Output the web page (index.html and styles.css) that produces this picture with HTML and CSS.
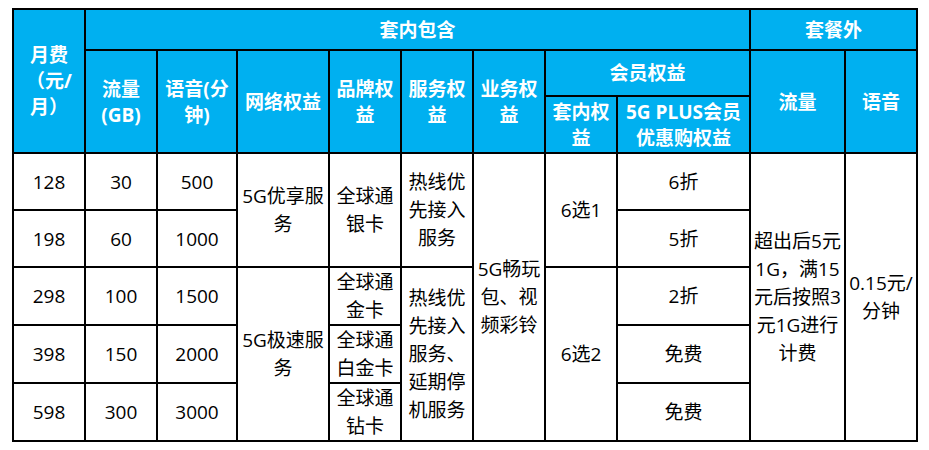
FILE: index.html
```html
<!DOCTYPE html>
<html lang="zh">
<head>
<meta charset="utf-8">
<title>套餐资费</title>
<link rel="stylesheet" href="styles.css">
</head>
<body>
<div class="page">
<table class="plan">
  <colgroup>
    <col class="c72"><col class="c72"><col class="c80"><col class="c92"><col class="c72"><col class="c72"><col class="c72"><col class="c72"><col class="c133"><col class="c95"><col class="c72">
  </colgroup>
  <thead>
    <tr class="h1">
      <th rowspan="3">月费<br>（元/<br>月）</th>
      <th colspan="8">套内包含</th>
      <th colspan="2">套餐外</th>
    </tr>
    <tr class="h2">
      <th rowspan="2">流量<br>(GB)</th>
      <th rowspan="2">语音(分<br>钟)</th>
      <th rowspan="2">网络权益</th>
      <th rowspan="2">品牌权<br>益</th>
      <th rowspan="2">服务权<br>益</th>
      <th rowspan="2">业务权<br>益</th>
      <th colspan="2">会员权益</th>
      <th rowspan="2">流量</th>
      <th rowspan="2">语音</th>
    </tr>
    <tr class="h3">
      <th>套内权<br>益</th>
      <th>5G PLUS会员<br>优惠购权益</th>
    </tr>
  </thead>
  <tbody>
    <tr>
      <td>128</td><td>30</td><td>500</td>
      <td rowspan="2">5G优享服<br>务</td>
      <td rowspan="2">全球通<br>银卡</td>
      <td rowspan="2">热线优<br>先接入<br>服务</td>
      <td rowspan="5">5G畅玩<br>包、视<br>频彩铃</td>
      <td rowspan="2">6选1</td>
      <td>6折</td>
      <td rowspan="5">超出后5元<br>1G，满15<br>元后按照3<br>元1G进行<br>计费</td>
      <td rowspan="5">0.15元/<br>分钟</td>
    </tr>
    <tr>
      <td>198</td><td>60</td><td>1000</td>
      <td>5折</td>
    </tr>
    <tr>
      <td>298</td><td>100</td><td>1500</td>
      <td rowspan="3">5G极速服<br>务</td>
      <td>全球通<br>金卡</td>
      <td rowspan="3">热线优<br>先接入<br>服务、<br>延期停<br>机服务</td>
      <td rowspan="3">6选2</td>
      <td>2折</td>
    </tr>
    <tr>
      <td>398</td><td>150</td><td>2000</td>
      <td>全球通<br>白金卡</td>
      <td>免费</td>
    </tr>
    <tr>
      <td>598</td><td>300</td><td>3000</td>
      <td>全球通<br>钻卡</td>
      <td>免费</td>
    </tr>
  </tbody>
</table>
</div>
</body>
</html>
```
FILE: styles.css
```css
html, body {
  margin: 0;
  padding: 0;
  background: #ffffff;
}
.page {
  padding: 8px 0 0 12px;
}
.plan {
  border-collapse: collapse;
  table-layout: fixed;
  width: 906px;
  font-family: "Open Sans", "Noto Sans CJK SC", sans-serif;
  font-size: 19px;
  color: #000;
}
.c72 { width: 72px; }
.c80 { width: 80px; }
.c92 { width: 92px; }
.c133 { width: 133px; }
.c95 { width: 95px; }
.plan th, .plan td {
  border: 2px solid #000;
  padding: 0 1px;
  text-align: center;
  vertical-align: middle;
  overflow: hidden;
  white-space: nowrap;
}
.plan th {
  background: #00b0f0;
  color: #fff;
  font-weight: 700;
  line-height: 26px;
}
.plan td {
  font-weight: 400;
  line-height: 28px;
}
.h1 { height: 41px; }
.h2 { height: 46px; }
.h3 { height: 57px; }
.plan tbody tr { height: 57px; }
```
